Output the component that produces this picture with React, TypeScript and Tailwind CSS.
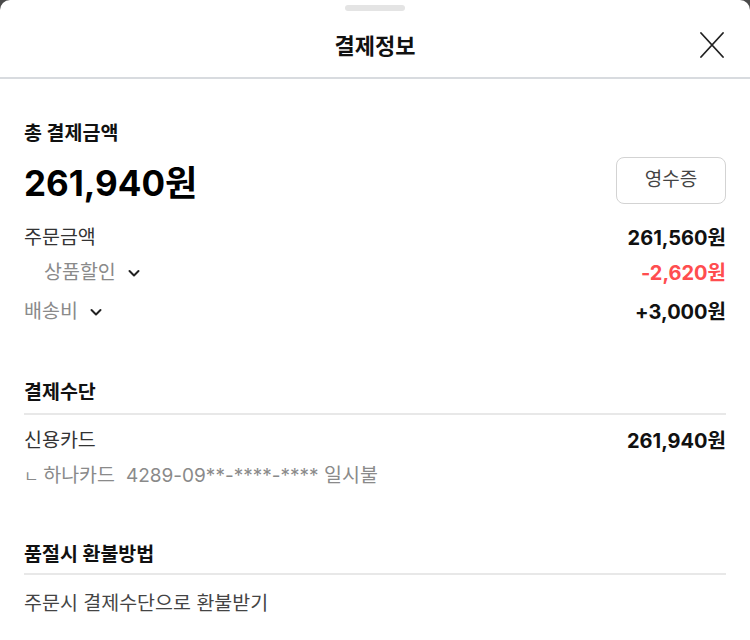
import React from "react";

const FONT = {
  fontFamily: 'Inter, "Noto Sans CJK KR", sans-serif',
};

const Chevron: React.FC = () => (
  <svg width="14" height="14" viewBox="0 0 14 14" className="ml-[11px]">
    <path d="M2.5 5 L7 9.5 L11.5 5" fill="none" stroke="#222" strokeWidth="2" strokeLinecap="round" strokeLinejoin="round" />
  </svg>
);

const App: React.FC = () => {
  return (
    <div className="w-[750px] h-[640px] bg-[#4a4a4a] overflow-hidden" style={FONT}>
      <div className="bg-white h-full rounded-t-[10px]">
        {/* grab handle */}
        <div className="h-[16px] pt-[5px]">
          <div className="mx-auto w-[60px] h-[6px] rounded-full bg-[#e4e4e4]"></div>
        </div>

        {/* header */}
        <div className="relative h-[63px] flex items-center justify-center border-b-2 border-[#d8dbdf]">
          <h1 className="text-[22px] font-bold text-[#111]">결제정보</h1>
          <button className="absolute right-[26px] top-[16px]">
            <svg width="24" height="26" viewBox="0 0 24 26">
              <path d="M1 1 L23 25 M23 1 L1 25" stroke="#222" strokeWidth="1.8" strokeLinecap="round" />
            </svg>
          </button>
        </div>

        <div className="px-6">
          {/* total */}
          <p className="mt-[42px] text-[19.5px] leading-[24px] font-bold text-[#111]">총 결제금액</p>
          <div className="mt-[12px] flex items-center justify-between h-[47px]">
            <span className="text-[35px] leading-[44px] font-bold text-black pt-[5px]">261,940원</span>
            <button className="w-[110px] h-[47px] rounded-[8px] border border-[#d3d3d3] text-[19px] text-[#444]">
              영수증
            </button>
          </div>

          <div className="mt-[21px] flex justify-between items-center h-[26px] text-[19.5px]">
            <span className="text-[#333]">주문금액</span>
            <span className="text-[20px] font-bold text-[#111]">261,560원</span>
          </div>
          <div className="mt-[9px] flex justify-between items-center h-[26px] text-[19.5px]">
            <span className="flex items-center pl-[20px] text-[#8a8a8a]">
              상품할인
              <Chevron />
            </span>
            <span className="text-[20px] font-bold text-[#ff4d4f]">-2,620원</span>
          </div>
          <div className="mt-[13px] flex justify-between items-center h-[26px] text-[19.5px]">
            <span className="flex items-center text-[#8a8a8a]">
              배송비
              <Chevron />
            </span>
            <span className="text-[20px] font-bold text-[#111]">+3,000원</span>
          </div>

          {/* payment method */}
          <div className="mt-[55px] pb-[9px] border-b-2 border-[#e8e8e8]">
            <p className="text-[19.5px] leading-[24px] font-bold text-[#111]">결제수단</p>
          </div>
          <div className="mt-[13px] flex justify-between items-center h-[26px] text-[19.5px]">
            <span className="text-[#333]">신용카드</span>
            <span className="text-[20px] font-bold text-[#111]">261,940원</span>
          </div>
          <p className="mt-[8px] h-[26px] leading-[26px] text-[19.5px] text-[#8a8a8a]">
            <span className="text-[16px]">ㄴ </span>하나카드&nbsp; <span className="text-[19px]">4289-09**-****-****</span> 일시불
          </p>

          {/* refund */}
          <div className="mt-[54px] pb-[7px] border-b-2 border-[#e8e8e8]">
            <p className="text-[19.5px] leading-[24px] font-bold text-[#111]">품절시 환불방법</p>
          </div>
          <p className="mt-[15px] h-[26px] leading-[26px] text-[19.5px] text-[#444]">
            주문시 결제수단으로 환불받기
          </p>
        </div>
      </div>
    </div>
  );
};

export default App;
